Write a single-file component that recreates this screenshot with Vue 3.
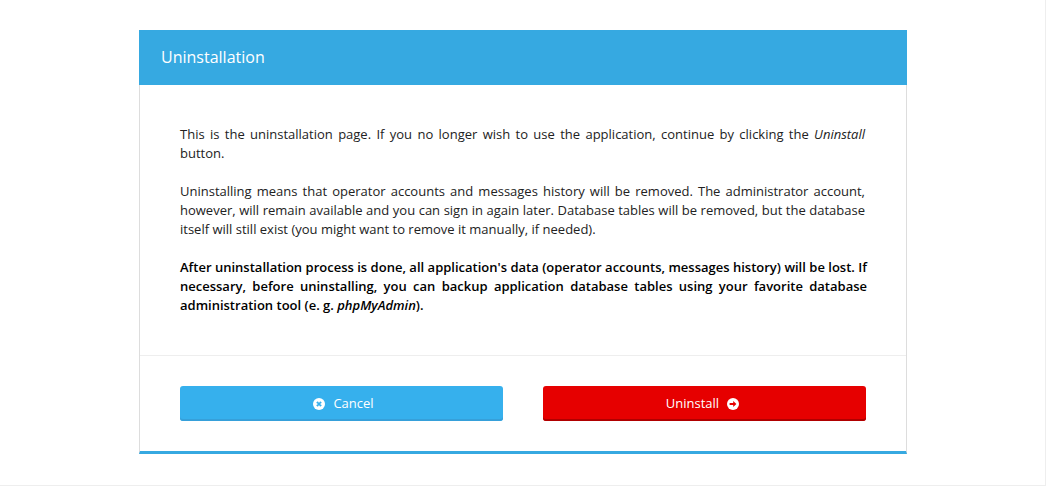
<script setup>
</script>

<template>
  <main class="page">
    <section class="panel">
      <header class="head"><h1>Uninstallation</h1></header>
      <div class="content">
        <p>This is the uninstallation page. If you no longer wish to use the application, continue by clicking the <em>Uninstall</em> button.</p>
        <p>Uninstalling means that operator accounts and messages history will be removed. The administrator account, however, will remain available and you can sign in again later. Database tables will be removed, but the database itself will still exist (you might want to remove it manually, if needed).</p>
        <p class="warning">After uninstallation process is done, all application's data (operator accounts, messages history) will be lost. If necessary, before uninstalling, you can backup application database tables using your favorite database administration tool (e. g. <em>phpMyAdmin</em>).</p>
      </div>
      <footer class="actions">
        <button type="button" class="btn cancel">
          <svg viewBox="0 0 12 12" aria-hidden="true"><circle cx="6" cy="6" r="6" fill="#fff"/><path d="M4 4l4 4M8 4L4 8" stroke="#36b0ed" stroke-width="2.4"/><path d="M5.5 3h1v1.5h-1zM5.5 7.5h1V9h-1zM3 5.5h1.5v1H3zM7.5 5.5H9v1H7.5z" fill="#fff"/></svg>
          <span>Cancel</span>
        </button>
        <button type="button" class="btn remove">
          <span>Uninstall</span>
          <svg viewBox="0 0 12 12" aria-hidden="true"><circle cx="6" cy="6" r="6" fill="#fff"/><path d="M2.6 5.1h3.6V3L9.4 6 6.2 9V6.9H2.6z" fill="#e60000"/></svg>
        </button>
      </footer>
    </section>
  </main>
</template>

<style>
body { margin: 0; background: #fff; }
</style>
<style scoped>
* { box-sizing: border-box; }
.page {
  min-height: 100vh;
  padding: 30px 138px 31px 139px;
  border-right: 1px solid #eee;
  border-bottom: 1px solid #eee;
  font: 13px/19px "Open Sans", sans-serif;
  color: #222;
}
.panel { border: 1px solid #ddd; border-top: 0; border-bottom: 3px solid #36a9e1; }
.head { margin: 0 -1px; padding: 15px 22px 16px; background: #36a9e1; color: #fff; }
h1 { margin: 0; font-size: 16px; line-height: 24px; font-weight: 400; }
.content { padding: 40px 41px 40px 40px; text-align: justify; }
p { margin: 0 0 19px; }
.warning { margin: 0 -2px 0 0; font-weight: 600; color: #000; }
.actions { display: grid; grid-template-columns: 1fr 1fr; gap: 40px; padding: 30px 40px; border-top: 1px solid #eee; }
.btn {
  display: flex; align-items: center; justify-content: center; gap: 8px;
  height: 35px; padding: 0; border: 0; border-radius: 3px;
  font: inherit; color: #fff; cursor: pointer;
}
.btn svg { width: 12px; height: 12px; }
.cancel { padding-left: 4px; background: #36b0ed; box-shadow: inset 0 -2px #36a0da; }
.remove { padding-right: 4px; background: #e60000; box-shadow: inset 0 -2px #b00000; }
</style>
